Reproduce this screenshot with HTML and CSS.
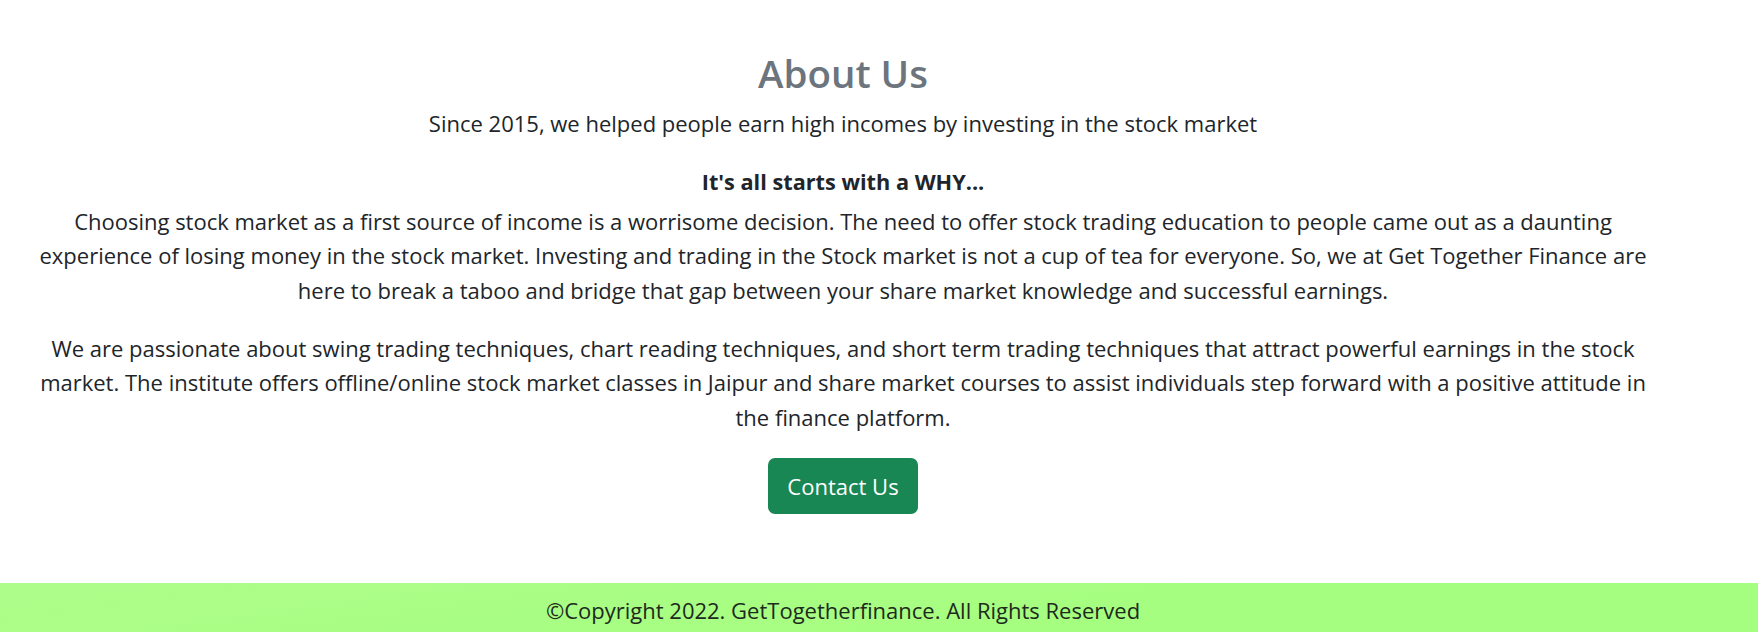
FILE: index.html
```html
<!DOCTYPE html>
<html lang="en">
<head>
<meta charset="utf-8">
<title>About Us</title>
<link rel="stylesheet" href="styles.css">
</head>
<body>
<main class="page">
  <section class="about">
    <h1 class="about-title">About Us</h1>
    <p class="about-lead">Since 2015, we helped people earn high incomes by investing in the stock market</p>
    <h5 class="about-why">It's all starts with a WHY...</h5>
    <p class="about-text">Choosing stock market as a first source of income is a worrisome decision. The need to offer stock trading education to people came out as a daunting experience of losing money in the stock market. Investing and trading in the Stock market is not a cup of tea for everyone. So, we at Get Together Finance are here to break a taboo and bridge that gap between your share market knowledge and successful earnings.</p>
    <p class="about-text">We are passionate about swing trading techniques, chart reading techniques, and short term trading techniques that attract powerful earnings in the stock market. The institute offers offline/online stock market classes in Jaipur and share market courses to assist individuals step forward with a positive attitude in the finance platform.</p>
    <a class="btn-contact" href="#">Contact Us</a>
  </section>
</main>
<footer class="footer">
  <p class="footer-text">©Copyright 2022. GetTogetherfinance. All Rights Reserved</p>
</footer>
</body>
</html>
```

FILE: styles.css
```css
* { box-sizing: border-box; }
html, body { margin: 0; padding: 0; }
body {
  font-family: "Open Sans", "Noto Sans", "Liberation Sans", sans-serif;
  color: #212529;
  background: #fff;
}
.page {
  padding: 49px 103px 0 31px;
}
.about {
  display: flex;
  flex-direction: column;
  align-items: center;
  text-align: center;
}
.about-title {
  margin: 0;
  font-size: 38.5px;
  line-height: 48px;
  font-weight: 600;
  color: #6c757d;
}
.about-lead {
  margin: 11px 0 0;
  font-size: 22px;
  line-height: 31.5px;
}
.about-why {
  margin: 29px 0 0;
  font-size: 21.7px;
  line-height: 25px;
  font-weight: 700;
}
.about-text {
  margin: 10px 0 0;
  font-size: 22px;
  line-height: 34.5px;
}
.about-text + .about-text {
  margin-top: 23.5px;
}
.btn-contact {
  margin-top: 24px;
  display: inline-block;
  padding: 11.5px 19px;
  font-size: 22px;
  line-height: 33px;
  color: #fff;
  background: #198754;
  border-radius: 7px;
  text-decoration: none;
}
.footer {
  margin-top: 69px;
  padding: 12px 103px 40px 31px;
  background: linear-gradient(172deg, #adfd8a 0%, #a5fe7f 60%);
  text-align: center;
}
.footer-text {
  margin: 0;
  font-size: 22px;
  line-height: 31.5px;
  color: #1d2a1d;
}
```
